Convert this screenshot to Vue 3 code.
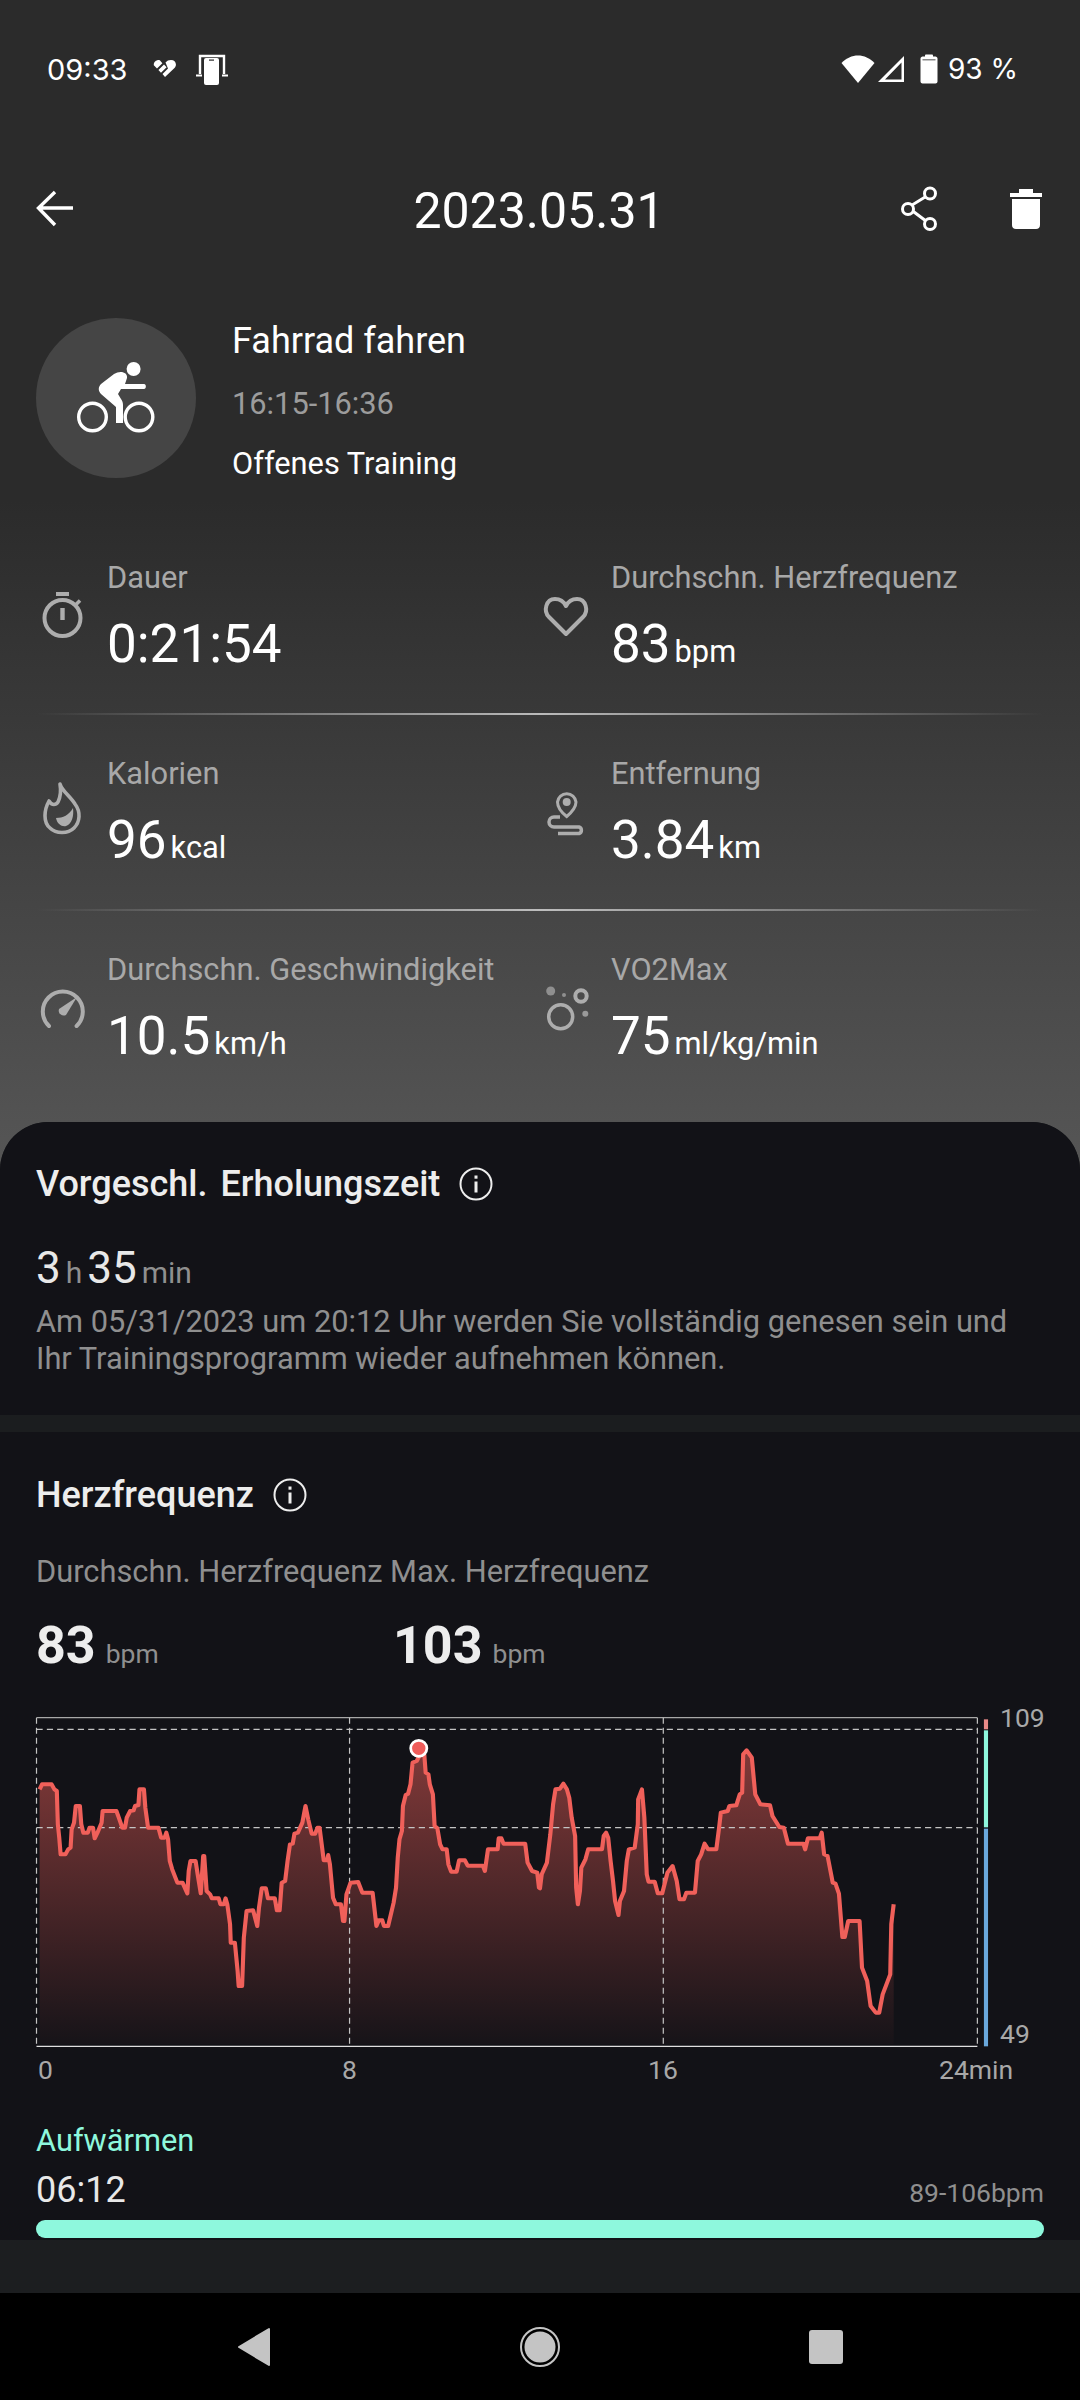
<template>
  <div class="phone">
    <!-- status bar -->
    <div class="status-bar">
      <div class="status-left">
        <span class="clock">09:33</span>
        <svg class="ic-fit" width="24" height="20" viewBox="0 0 24 20">
          <path d="M6 1C2.5 1 .5 3.5.8 6.200L4 9.600 9.400 4.200 6.800 1.200ZM11 5.400 5.400 11 8 13.800 13.600 8.200ZM15 9.400 9.500 15 12 18 21.500 9C24.500 5.500 22.500 1 18 1 15.500 1 14 1.800 12.500 3.500Z" fill="#fff" />
        </svg>
        <svg class="ic-cast" width="34" height="32" viewBox="0 0 34 32">
          <path d="M5 20V2H29V20" fill="none" stroke="#fff" stroke-width="2.400" />
          <path d="M1 21.500H7M27 21.500H33" stroke="#fff" stroke-width="2" />
          <rect x="9" y="4" width="15" height="27" rx="2" fill="#fff" />
          <rect x="14" y="5.500" width="5" height="1.200" fill="#2b2b2b" />
        </svg>
      </div>
      <div class="status-right">
        <svg width="34" height="30" viewBox="0 0 34 30">
          <path d="M17 29 .5 9C10 -1 24 -1 33.500 9Z" fill="#fff" />
        </svg>
        <svg class="ic-signal" width="28" height="28" viewBox="0 0 28 28">
          <path d="M27 1V27H1Z M24.500 7.500 8 24.500H24.500Z" fill="#fff" fill-rule="evenodd" />
        </svg>
        <svg class="ic-battery" width="18" height="30" viewBox="0 0 18 30">
          <path d="M5 2.500V1.500C5 1 5.500.5 6 .5H12C12.500.5 13 1 13 1.500V2.500H15.500C16.500 2.500 17.500 3.500 17.500 4.500V27.500C17.500 28.500 16.500 29.500 15.500 29.500H2.500C1.500 29.500.5 28.500.5 27.500V4.500C.5 3.500 1.500 2.500 2.500 2.500Z" fill="#fff" />
          <rect x="2.500" y="5" width="13" height="1.500" fill="#8a8a8a" />
        </svg>
        <span class="battery-text">93 %</span>
      </div>
    </div>

    <!-- header -->
    <div class="top-bar">
      <svg class="back-icon" width="40" height="40" viewBox="0 0 40 40">
        <path d="M37 20H3M19 4 2.500 20 19 37" fill="none" stroke="#fff" stroke-width="3.400" />
      </svg>
      <div class="top-title">2023.05.31</div>
      <div class="top-actions">
        <svg width="44" height="48" viewBox="0 0 44 48">
          <path d="M32 9 10 22.500 32 39" fill="none" stroke="#fff" stroke-width="3" />
          <circle cx="32" cy="8.500" r="5.500" fill="#2b2b2b" stroke="#fff" stroke-width="3" />
          <circle cx="10" cy="24" r="5.500" fill="#2b2b2b" stroke="#fff" stroke-width="3" />
          <circle cx="32" cy="39" r="5.500" fill="#2b2b2b" stroke="#fff" stroke-width="3" />
        </svg>
        <svg width="32" height="40" viewBox="0 0 32 40">
          <path d="M9 0H23V4H32V8H0V4H9Z" fill="#fff" />
          <path d="M2 10H30V36C30 38.500 28.500 40 26 40H6C3.500 40 2 38.500 2 36Z" fill="#fff" />
        </svg>
      </div>
    </div>

    <!-- activity -->
    <div class="activity">
      <div class="activity-badge">
        <svg width="84" height="74" viewBox="0 0 84 74">
          <circle cx="59.600" cy="8" r="7" fill="#fff" />
          <path d="M40 13C46 9 54 11 53 17L51 23H70C72.500 23 72.500 28 70 28H47L44 33 47 38C48.500 40 49 42 49 44V62H42V46L27 33C24 30 24 26 27 23Z" fill="#fff" />
          <circle cx="18.500" cy="56" r="13.800" fill="none" stroke="#fff" stroke-width="3.400" />
          <circle cx="65" cy="56" r="13.800" fill="none" stroke="#fff" stroke-width="3.400" />
        </svg>
      </div>
      <div class="activity-text">
        <div class="activity-name">Fahrrad fahren</div>
        <div class="activity-time">16:15-16:36</div>
        <div class="activity-mode">Offenes Training</div>
      </div>
    </div>

    <!-- metrics -->
    <div class="metrics">
      <template v-for="(row, i) in metricRows" :key="i">
        <div class="metric-row">
          <div v-for="m in row" :key="m.label" class="metric">
            <svg class="metric-icon" width="72" height="72" viewBox="0 0 72 72">
              <g v-if="m.icon === 'timer'">
                <circle cx="26.500" cy="36" r="18" fill="none" stroke="#adadad" stroke-width="4" />
                <rect x="20" y="10" width="13" height="4" fill="#adadad" />
                <rect x="24.300" y="26" width="4.400" height="12" fill="#adadad" />
                <path d="M40 22.500 44 18.500" stroke="#adadad" stroke-width="3.500" />
              </g>
              <path v-if="m.icon === 'heart'" d="M26 52 9 35C3 29 6 17 15 17 20 17 24 20 26 24 28 20 32 17 37 17 46 17 49 29 43 35Z" fill="none" stroke="#adadad" stroke-width="4" stroke-linejoin="round" />
              <g v-if="m.icon === 'flame'">
                <path d="M24 6C26 13 34 18 39 26 45 34 44 44 38 50 32 56 20 56 14 50 7 44 8 32 13 23 16 28 20 27 22 24 25 18 25 12 24 6Z" fill="none" stroke="#adadad" stroke-width="3.600" stroke-linejoin="round" />
                <path d="M37 30C33 37 27 40 20 40 21 46 26 49 30 48 36 46 38 38 37 30Z" fill="#adadad" />
              </g>
              <g v-if="m.icon === 'route'" fill="none" stroke="#adadad">
                <path d="M26.700 38.500C21 34 17.500 29 17.500 24A9.300 9.300 0 0 1 36 24C36 29 32 34 26.700 38.500Z" stroke-width="3" />
                <circle cx="26.700" cy="24" r="4" fill="#adadad" stroke="none" />
                <path d="M20 39H14A5 5 0 0 0 14 49H39A3.400 3.400 0 0 1 39 55.500H18" stroke-width="3.500" />
              </g>
              <g v-if="m.icon === 'gauge'">
                <path d="M13 52A20 20 0 1 1 40.600 52" fill="none" stroke="#adadad" stroke-width="4" stroke-linecap="round" />
                <path d="M41 23 30 41A5 5 0 0 1 23 35Z" fill="#adadad" />
              </g>
              <g v-if="m.icon === 'bubbles'">
                <circle cx="20.700" cy="42.700" r="12" fill="none" stroke="#adadad" stroke-width="3.500" />
                <circle cx="41" cy="22" r="5.700" fill="none" stroke="#adadad" stroke-width="4" />
                <circle cx="10.700" cy="17" r="4.500" fill="#8f8f8f" />
                <circle cx="24" cy="21" r="2" fill="#8f8f8f" />
                <circle cx="45.300" cy="39.700" r="3" fill="#9a9a9a" />
              </g>
            </svg>
            <div class="metric-body">
              <div class="metric-label">{{ m.label }}</div>
              <div class="metric-value">{{ m.value }}<span class="metric-unit">{{ m.unit }}</span></div>
            </div>
          </div>
        </div>
        <div v-if="i < metricRows.length - 1" class="metric-sep"></div>
      </template>
    </div>

    <!-- sheet -->
    <div class="sheet">
      <section class="recovery">
        <div class="section-title wide-title">
          <span>Vorgeschl. Erholungszeit</span>
          <svg class="info" width="34" height="34" viewBox="0 0 34 34">
            <circle cx="17" cy="17" r="15.500" fill="none" stroke="#ededed" stroke-width="2" />
            <rect x="15.500" y="14.500" width="3" height="11" fill="#ededed" />
            <rect x="15.500" y="8.500" width="3" height="3.200" fill="#ededed" />
          </svg>
        </div>
        <div class="recovery-time">3<span class="small-unit">h</span>35<span class="small-unit">min</span></div>
        <div class="recovery-desc">
          Am 05/31/2023 um 20:12 Uhr werden Sie vollständig genesen sein und<br />
          Ihr Trainingsprogramm wieder aufnehmen können.
        </div>
      </section>

      <section class="heart">
        <div class="section-title">
          <span>Herzfrequenz</span>
          <svg class="info" width="34" height="34" viewBox="0 0 34 34">
            <circle cx="17" cy="17" r="15.500" fill="none" stroke="#ededed" stroke-width="2" />
            <rect x="15.500" y="14.500" width="3" height="11" fill="#ededed" />
            <rect x="15.500" y="8.500" width="3" height="3.200" fill="#ededed" />
          </svg>
        </div>
        <div class="heart-labels">Durchschn. Herzfrequenz Max. Herzfrequenz</div>
        <div class="heart-values">
          <div class="heart-value">83<span>bpm</span></div>
          <div class="heart-value">103<span>bpm</span></div>
        </div>

        <div class="chart">
          <svg class="chart-svg" width="1080" height="345" viewBox="0 60 3136 1035" preserveAspectRatio="none">
            <defs>
              <linearGradient id="hrFill" gradientUnits="userSpaceOnUse" x1="0" y1="180" x2="0" y2="1060">
                <stop offset="0" stop-color="#f0605a" stop-opacity="0.5" />
                <stop offset="1" stop-color="#f0605a" stop-opacity="0.02" />
              </linearGradient>
            </defs>
            <path :d="areaPath" fill="url(#hrFill)" />
            <path d="M106 80H2838" stroke="#a8a8a8" stroke-width="4" />
            <path d="M106 1066H2838" stroke="#e0e0e0" stroke-width="4" />
            <path d="M106 115H2838M106 410H2838" stroke="#c4c4c4" stroke-width="3.500" stroke-dasharray="18 12" />
            <path d="M106 80V1066M1015 80V1066M1926 80V1066M2838 80V1066" stroke="#c4c4c4" stroke-width="3.500" stroke-dasharray="18 12" />
            <path :d="linePath" fill="none" stroke="#f0605a" stroke-width="12" stroke-linejoin="round" />
            <ellipse cx="1216" cy="172" rx="23.500" ry="24" fill="#ee5c5a" stroke="#fff" stroke-width="8" />
            <rect x="2857" y="85" width="12" height="30" fill="#e98a88" />
            <rect x="2857" y="118" width="12" height="291" fill="#8ef8dd" />
            <rect x="2857" y="413" width="12" height="653" fill="#6aa8dc" />
          </svg>
          <span class="y-label y-top">109</span>
          <span class="y-label y-bottom">49</span>
        </div>
        <div class="x-axis">
          <span>0</span><span>8</span><span>16</span><span>24min</span>
        </div>

        <div class="zone-name">Aufwärmen</div>
        <div class="zone-row">
          <span class="zone-time">06:12</span>
          <span class="zone-range">89-106bpm</span>
        </div>
        <div class="zone-bar"></div>
      </section>
      <div class="sheet-foot"></div>
    </div>

    <!-- nav bar -->
    <div class="nav-bar">
      <svg width="40" height="40" viewBox="0 0 40 40">
        <path d="M35 2V38L5 20Z" fill="#c4c4c4" stroke="#c4c4c4" stroke-width="2" stroke-linejoin="round" />
      </svg>
      <svg width="40" height="40" viewBox="0 0 40 40">
        <circle cx="20" cy="20" r="19" fill="none" stroke="#c4c4c4" stroke-width="2" />
        <circle cx="20" cy="20" r="15.500" fill="#c4c4c4" />
      </svg>
      <svg width="40" height="40" viewBox="0 0 40 40">
        <rect x="3" y="3" width="34" height="34" rx="3" fill="#c4c4c4" />
      </svg>
    </div>
  </div>
</template>

<script setup>
import { computed } from 'vue'

const metricRows = [
  [
    { icon: 'timer', label: 'Dauer', value: '0:21:54', unit: '' },
    { icon: 'heart', label: 'Durchschn. Herzfrequenz', value: '83', unit: 'bpm' }
  ],
  [
    { icon: 'flame', label: 'Kalorien', value: '96', unit: 'kcal' },
    { icon: 'route', label: 'Entfernung', value: '3.84', unit: 'km' }
  ],
  [
    { icon: 'gauge', label: 'Durchschn. Geschwindigkeit', value: '10.5', unit: 'km/h' },
    { icon: 'bubbles', label: 'VO2Max', value: '75', unit: 'ml/kg/min' }
  ]
]

// heart rate trace, left half then right half (x offset 1568)
const left = [
  115,295, 122,280, 150,280, 158,295, 165,300, 168,400, 172,440, 176,490, 190,490, 198,475, 205,470, 208,415,
  215,395, 220,345, 232,345, 236,400, 242,425, 255,425, 260,410, 270,410, 275,442, 283,425, 295,395, 298,360,
  338,360, 345,380, 355,410, 363,410, 368,380, 378,360, 388,358, 392,345, 402,342, 405,295, 418,295, 422,350,
  430,410, 460,410, 468,440, 478,440, 483,425, 488,445, 493,510, 500,535, 515,575, 530,575, 544,607, 548,540,
  553,510, 568,510, 574,550, 583,607, 590,495, 593,495, 600,600, 610,610, 615,622, 635,622, 640,640, 650,640,
  655,622, 660,640, 668,700, 670,755, 682,755, 690,840, 693,885, 703,885, 708,740, 716,660, 735,658, 747,705,
  752,650, 760,592, 772,592, 778,622, 798,622, 804,658, 812,658, 818,575, 828,570, 835,510, 842,460, 850,458,
  855,428, 865,425, 878,395, 887,345, 895,385, 905,428, 915,428, 922,410, 928,410, 940,508, 950,508, 953,492,
  958,520, 967,620, 975,640, 990,640, 996,690, 1000,690, 1006,610, 1018,575, 1040,573, 1052,605, 1082,605,
  1093,705, 1100,688, 1110,688, 1115,705, 1127,705, 1143,635, 1150,590, 1155,500, 1160,445, 1167,420, 1170,345,
  1178,312, 1185,308, 1192,280, 1198,215, 1210,210, 1220,190, 1232,190, 1236,245, 1244,250, 1248,280, 1257,310,
  1262,405, 1270,412, 1278,460, 1285,475, 1297,475, 1302,520, 1310,542, 1326,542, 1333,508, 1350,508, 1358,524,
  1402,524, 1408,540, 1417,475, 1445,475, 1448,442, 1456,442, 1462,458, 1525,458, 1532,515, 1545,540, 1560,545,
  1565,590
]
const right = [
  0,592, 5,550, 20,515, 30,430, 38,340, 45,295, 58,293, 68,278, 78,295, 85,320, 92,380, 102,435, 105,590, 110,640,
  116,600, 120,530, 132,505, 140,475, 180,475, 185,435, 192,425, 198,440, 205,510, 212,570, 218,630, 228,672,
  232,630, 244,600, 252,510, 258,475, 275,470, 284,400, 285,325, 296,295, 303,380, 310,550, 315,572, 333,572,
  342,607, 355,607, 370,545, 385,525, 397,570, 405,625, 418,625, 425,605, 450,605, 458,510, 468,490, 478,458,
  488,475, 512,475, 520,410, 525,365, 545,360, 550,345, 570,343, 580,310, 587,305, 590,190, 600,178, 615,200,
  625,310, 640,340, 668,343, 675,375, 695,408, 708,410, 720,458, 765,458, 770,475, 778,442, 812,442, 818,425,
  825,490, 835,495, 850,575, 858,578, 868,608, 878,738, 885,738, 895,690, 928,690, 935,830, 950,870, 960,945,
  975,965, 985,965, 995,910, 1017,850, 1020,700, 1027,640
]

const points = computed(() => {
  const pts = []
  for (let i = 0; i < left.length; i += 2) pts.push([left[i], left[i + 1]])
  for (let i = 0; i < right.length; i += 2) {
    if (left[left.length - 2] < right[i] + 1568) pts.push([right[i] + 1568, right[i + 1]])
  }
  return pts
})

const linePath = computed(() => 'M' + points.value.map(p => p.join(' ')).join('L'))
const areaPath = computed(() => linePath.value + 'L2595 1060L115 1060Z')
</script>

<style scoped>
.phone {
  width: 1080px;
  height: 2400px;
  overflow: hidden;
  display: flex;
  flex-direction: column;
  background: linear-gradient(#2b2b2b 0, #2b2b2b 500px, #565656 1170px);
  font-family: Roboto, "Noto Sans", sans-serif;
  color: #fff;
}

.status-bar {
  height: 40px;
  margin-top: 49px;
  margin-bottom: -1px;
  padding: 0 65px 0 47px;
  display: flex;
  justify-content: space-between;
  align-items: center;
  font-family: Inter, Roboto, sans-serif;
  font-size: 29px;
}

.status-left,
.status-right {
  display: flex;
  align-items: center;
}

.clock {
  width: 106px;
}

.ic-cast {
  margin-left: 18px;
  margin-top: 2px;
}

.ic-signal {
  margin-left: 2px;
}

.ic-battery {
  margin-left: 15px;
}

.battery-text {
  margin-left: 10px;
  width: 67px;
  white-space: nowrap;
  font-size: 28px;
}

.top-bar {
  height: 100px;
  margin-top: 69px;
  padding: 0 38px 0 36px;
  display: grid;
  grid-template-columns: 1fr auto 1fr;
  align-items: center;
}

.back-icon {
  margin-bottom: 2px;
}

.top-title {
  margin-top: 4px;
  font-size: 50px;
  line-height: 100px;
}

.top-actions {
  margin-bottom: 1px;
  display: flex;
  justify-content: flex-end;
  align-items: center;
  gap: 68px;
}

.activity {
  margin-top: 61px;
  padding-left: 36px;
  display: flex;
  gap: 36px;
}

.activity-badge {
  width: 160px;
  height: 160px;
  border-radius: 50%;
  background: #454545;
  display: flex;
  align-items: center;
  justify-content: center;
}

.activity-name {
  margin-top: 1px;
  font-size: 36px;
  line-height: 44px;
}

.activity-time {
  margin-top: 21px;
  font-size: 30.800px;
  line-height: 40px;
  color: #9c9c9c;
}

.activity-mode {
  margin-top: 20px;
  font-size: 30.800px;
  line-height: 40px;
}

.metrics {
  margin-top: 35px;
  padding: 0 36px;
}

.metric-row {
  height: 194px;
  padding-top: 41px;
  box-sizing: border-box;
  display: grid;
  grid-template-columns: 504px 1fr;
}

.metric-sep {
  height: 2px;
  background: linear-gradient(90deg, rgba(255, 255, 255, 0), rgba(255, 255, 255, 0.65) 50%, rgba(255, 255, 255, 0));
}

.metric {
  display: flex;
  align-items: flex-start;
}

.metric-icon {
  margin-top: 22px;
  margin-right: -1px;
  flex-shrink: 0;
}

.metric-label {
  font-size: 30.800px;
  line-height: 36px;
  color: #a8a8a8;
  white-space: nowrap;
}

.metric-value {
  margin-top: 16px;
  font-size: 53px;
  line-height: 64px;
  white-space: nowrap;
}

.metric-unit {
  margin-left: 4px;
  font-size: 30.800px;
  line-height: 1;
}

.sheet {
  margin-top: 17px;
  flex: 1;
  border-radius: 48px 48px 0 0;
  background: #1b1d1f;
  overflow: hidden;
}

.recovery {
  height: 293px;
  padding: 40px 36px 0;
  box-sizing: border-box;
  background: #121217;
}

.section-title {
  display: flex;
  align-items: center;
  font-size: 36px;
  font-weight: 500;
  line-height: 44px;
  color: #ededed;
}

.wide-title {
  word-spacing: 4px;
}

.info {
  margin-left: 19px;
}

.recovery-time {
  margin-top: 34px;
  font-size: 44px;
  line-height: 56px;
  color: #e8e8e8;
}

.small-unit {
  margin: 0 5px;
  font-size: 30px;
  line-height: 1;
  color: #8f8f8f;
}

.recovery-desc {
  margin-top: 7px;
  font-size: 30.800px;
  line-height: 37px;
  color: #8f8f8f;
  white-space: nowrap;
}

.heart {
  margin-top: 17px;
  height: 808px;
  padding: 41px 36px 0;
  box-sizing: border-box;
  background: #121217;
}

.heart-labels {
  margin-top: 37px;
  font-size: 30.800px;
  line-height: 36px;
  color: #8f8f8f;
}

.heart-values {
  margin-top: 26px;
  display: grid;
  grid-template-columns: 357px 1fr;
}

.heart-value {
  font-size: 52px;
  font-weight: 700;
  line-height: 60px;
  color: #ededed;
}

.heart-value span {
  margin-left: 10px;
  font-size: 26.500px;
  font-weight: 400;
  line-height: 1;
  color: #8f8f8f;
}

.chart {
  position: relative;
  margin: 35px 0 0 -36px;
  width: 1080px;
  height: 345px;
}

.chart-svg {
  display: block;
}

.y-label {
  position: absolute;
  left: 1000px;
  font-size: 26.500px;
  line-height: 32px;
  color: #a8a8a8;
}

.y-top {
  top: -9px;
}

.y-bottom {
  top: 307px;
}

.x-axis {
  margin-top: -2px;
  padding-left: 2px;
  display: grid;
  grid-template-columns: 304px 306px 291px auto;
  font-size: 26.500px;
  line-height: 32px;
  color: #a8a8a8;
}

.zone-name {
  margin-top: 37px;
  font-size: 30.800px;
  line-height: 36px;
  color: #8ef8dd;
}

.zone-row {
  margin-top: 9px;
  display: flex;
  justify-content: space-between;
  align-items: baseline;
}

.zone-time {
  font-size: 36px;
  line-height: 44px;
  color: #e8e8e8;
}

.zone-range {
  font-size: 26.500px;
  color: #8f8f8f;
}

.zone-bar {
  margin-top: 8px;
  height: 18px;
  border-radius: 9px;
  background: #8ef8dd;
}

.sheet-foot {
  height: 53px;
  background: #1c1e20;
}

.nav-bar {
  height: 107px;
  background: #000;
  display: flex;
  justify-content: center;
  align-items: center;
  gap: 246px;
}
</style>
